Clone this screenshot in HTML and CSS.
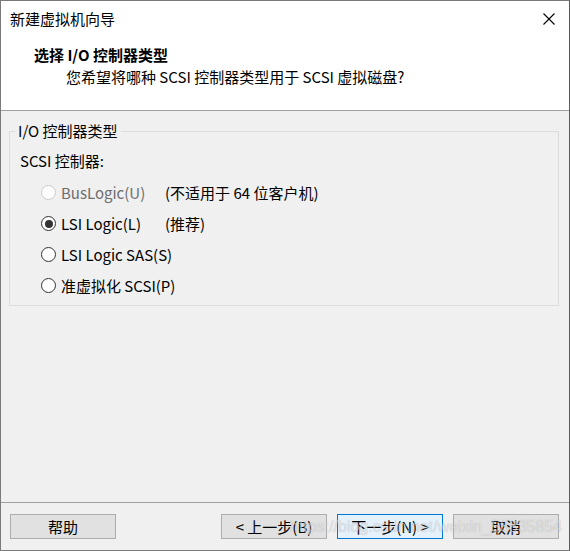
FILE: index.html
```html
<!DOCTYPE html>
<html lang="zh-CN">
<head>
<meta charset="utf-8">
<title>新建虚拟机向导</title>
<link rel="stylesheet" href="styles.css">
</head>
<body>
<div class="window">
  <div class="titlebar">
    <span class="title">新建虚拟机向导</span>
    <span class="close">
      <svg width="12" height="12" viewBox="0 0 12 12"><path d="M0.5 0.5 L11.5 11.5 M11.5 0.5 L0.5 11.5" stroke="#000" stroke-width="1.1" fill="none"/></svg>
    </span>
  </div>
  <div class="header">
    <div class="heading">选择 I/O 控制器类型</div>
    <div class="subtitle">您希望将哪种 SCSI 控制器类型用于 SCSI 虚拟磁盘?</div>
  </div>
  <div class="content">
    <div class="group">
      <div class="legend">I/O 控制器类型</div>
      <div class="group-label">SCSI 控制器:</div>
      <div class="options">
        <div class="opt disabled"><span class="radio"></span><span class="opt-text">BusLogic(U)</span></div>
        <div class="note">(不适用于 64 位客户机)</div>
        <div class="opt"><span class="radio checked"></span><span class="opt-text">LSI Logic(L)</span></div>
        <div class="note">(推荐)</div>
        <div class="opt"><span class="radio"></span><span class="opt-text">LSI Logic SAS(S)</span></div>
        <div class="note"></div>
        <div class="opt"><span class="radio"></span><span class="opt-text">准虚拟化 SCSI(P)</span></div>
        <div class="note"></div>
      </div>
    </div>
  </div>
  <div class="footer">
    <button class="btn">帮助</button>
    <span class="spacer"></span>
    <button class="btn">&lt; 上一步(B)</button>
    <button class="btn primary">下一步(N) &gt;</button>
    <button class="btn">取消</button>
  </div>
  <div class="watermark">https://blog.csdn.net/weixin_58835854</div>
</div>
</body>
</html>
```
FILE: styles.css
```css
* { box-sizing: border-box; }
html, body { margin: 0; padding: 0; background: #f0f0f0; }
body {
  font-family: "Noto Sans CJK SC", "Noto Sans", sans-serif;
  font-size: 15px;
  line-height: 20px;
  color: #000;
}
.window {
  position: relative;
  width: 570px;
  height: 551px;
  border: 1px solid #7a7a7a;
  border-right-color: #5a5a5a;
  display: flex;
  flex-direction: column;
  background: #f0f0f0;
  overflow: hidden;
}
.titlebar {
  height: 36px;
  flex: none;
  background: #fff;
  display: flex;
  align-items: center;
  justify-content: space-between;
  padding: 0 14px 0 9px;
}
.close { display: flex; width: 12px; height: 12px; }
.header {
  height: 74px;
  flex: none;
  background: #fff;
  border-bottom: 1px solid #a0a0a0;
  padding-top: 7px;
}
.heading {
  font-weight: bold;
  line-height: 22px;
  padding-left: 33px;
}
.subtitle {
  line-height: 22px;
  padding-left: 65px;
}
.content {
  flex: 1;
  padding: 20px 10px 0 8px;
}
.group {
  border: 1px solid #dcdcdc;
  height: 175px;
  padding: 0 0 0 10px;
}
.legend {
  display: block;
  width: max-content;
  background: #f0f0f0;
  line-height: 20px;
  margin-top: -11px;
  margin-left: -5px;
  padding: 0 3px;
}
.group-label {
  margin-top: 10px;
  line-height: 20px;
}
.options {
  margin-top: 6px;
  display: grid;
  grid-template-columns: 124px auto;
  grid-auto-rows: 31px;
  align-items: center;
  padding-left: 21px;
}
.opt {
  display: flex;
  align-items: center;
  gap: 5px;
  white-space: nowrap;
}
.radio {
  width: 15px;
  height: 15px;
  border-radius: 50%;
  border: 1px solid #333;
  background: #fff;
  display: flex;
  align-items: center;
  justify-content: center;
  flex: none;
}
.radio.checked::after {
  content: "";
  width: 8px;
  height: 8px;
  border-radius: 50%;
  background: #333;
}
.disabled .radio { border-color: #cccccc; background: #fcfcfc; }
.disabled .opt-text { color: #6d6d6d; }
.note { white-space: nowrap; }
.footer {
  height: 48px;
  flex: none;
  border-top: 1px solid #a0a0a0;
  display: flex;
  align-items: flex-start;
  padding: 11px 10px 0 9px;
  gap: 10px;
}
.spacer { flex: 1; }
.btn {
  width: 106px;
  height: 25px;
  font-family: inherit;
  font-size: 15px;
  line-height: 20px;
  background: #e1e1e1;
  border: 1px solid #adadad;
  color: #000;
  padding: 0;
  margin: 0;
}
.btn.primary {
  background: #e5f1fb;
  border-color: #0078d7;
}
.watermark {
  position: absolute;
  left: 289px;
  top: 516px;
  font-family: "Liberation Sans", sans-serif;
  font-size: 16px;
  line-height: 20px;
  color: rgba(255, 255, 255, 0.55);
  text-shadow: 0 0 1px rgba(0, 0, 0, 0.25);
  pointer-events: none;
  white-space: nowrap;
}
```
